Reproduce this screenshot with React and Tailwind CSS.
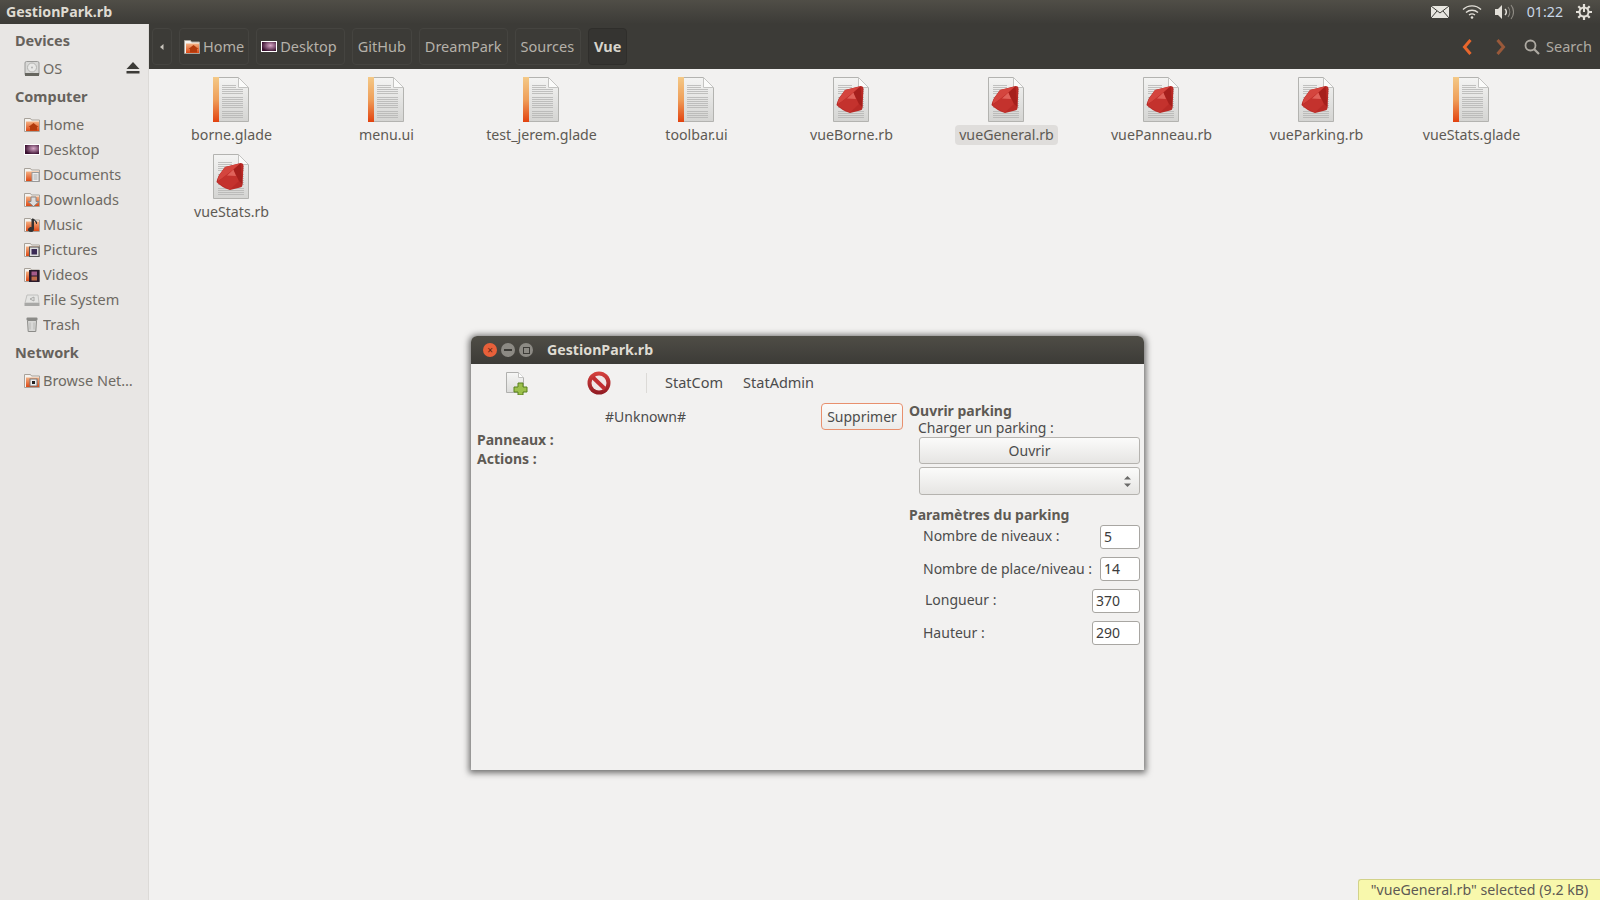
const font = { fontFamily: '"Noto Sans", "Open Sans", sans-serif' };

const places = [
  { label: "Home", icon: "home" },
  { label: "Desktop", icon: "desktop" },
  { label: "Documents", icon: "docs" },
  { label: "Downloads", icon: "down" },
  { label: "Music", icon: "music" },
  { label: "Pictures", icon: "pics" },
  { label: "Videos", icon: "video" },
  { label: "File System", icon: "fs" },
  { label: "Trash", icon: "trash" },
];
const files = [
  ["borne.glade", "doc"],
  ["menu.ui", "doc"],
  ["test_jerem.glade", "doc"],
  ["toolbar.ui", "doc"],
  ["vueBorne.rb", "ruby"],
  ["vueGeneral.rb", "ruby"],
  ["vuePanneau.rb", "ruby"],
  ["vueParking.rb", "ruby"],
  ["vueStats.glade", "doc"],
  ["vueStats.rb", "ruby"],
];

function PlaceIcon({ kind }) {
  if (kind === "desktop")
    return (
      <svg width="16" height="16" viewBox="0 0 16 16">
        <defs>
          <radialGradient id="aubergine" cx="0.6" cy="0.4" r="0.6">
            <stop offset="0" stopColor="#d8a8c8" />
            <stop offset="1" stopColor="#3a1030" />
          </radialGradient>
        </defs>
        <rect x="0.5" y="2.5" width="15" height="10" fill="url(#aubergine)" stroke="#fff" />
      </svg>
    );
  if (kind === "disk")
    return (
      <svg width="16" height="16" viewBox="0 0 16 16">
        <rect x="1" y="0.5" width="14" height="14" rx="1.5" fill="#d8d8d6" stroke="#9a9a98" />
        <circle cx="8" cy="6.500" r="4.500" fill="#e8e8e6" stroke="#b4b4b2" />
        <circle cx="8" cy="6.500" r="1" fill="#b4b4b2" />
        <rect x="1" y="12" width="14" height="3" fill="#66665f" />
      </svg>
    );
  if (kind === "fs")
    return (
      <svg width="16" height="16" viewBox="0 0 16 16">
        <path d="M3 3h11l1 8H1z" fill="#e4e4e2" stroke="#c0c0be" />
        <rect x="0.5" y="11" width="15" height="3" fill="#a8a8a6" />
        <path d="M10 5L6 7l4 2z" fill="none" stroke="#a8a8a6" />
      </svg>
    );
  if (kind === "trash")
    return (
      <svg width="16" height="16" viewBox="0 0 16 16">
        <rect x="2.500" y="0.500" width="11" height="3" rx="1" fill="#8b8b88" />
        <path d="M3.500 3.500h9l-.7 11H4.200z" fill="#d8d8d6" stroke="#8b8b88" />
        <path d="M6 5.500v7M10 5.500v7" stroke="#b8b8b6" />
      </svg>
    );
  const inner = {
    home: <path d="M9.500 6l-5 4h1.500v3.500h7V10h1.500z" fill="#b23a0c" />,
    docs: <><rect x="8" y="5.500" width="7" height="9" fill="#eee" stroke="#999" /><path d="M9.500 8h4M9.500 10h4M9.500 12h4" stroke="#aaa" /></>,
    down: <path d="M7 5h5v4.500h3l-5.500 5-5.500-5h3z" fill="#ddd" stroke="#888" />,
    music: <path d="M9.500 2v10.500a2.500 2 0 1 1-1.500-1.800V2zM9.500 2l3 3v2" fill="#333" stroke="#333" />,
    pics: <><rect x="5.500" y="5" width="9.500" height="9.500" fill="#ddd" stroke="#555" /><rect x="7.500" y="7" width="5.500" height="5.500" fill="#3a2a55" /></>,
    video: <><rect x="5" y="3" width="10.500" height="12" fill="#2a1a2a" /><rect x="7.500" y="4.500" width="5.500" height="4" fill="#a65a8a" /><rect x="7.500" y="9.500" width="5.500" height="4" fill="#c06a4a" /></>,
    browse: <><rect x="6" y="6" width="7" height="7" fill="#eee" stroke="#777" /><rect x="8" y="8" width="3" height="3" fill="#222" /></>,
  }[kind];
  return (
    <svg width="16" height="16" viewBox="0 0 16 16">
      <defs>
        <linearGradient id="folder" x1="0" y1="0" x2="0" y2="1">
          <stop offset="0" stopColor="#f4b183" />
          <stop offset="1" stopColor="#dd4814" />
        </linearGradient>
      </defs>
      <path d="M0.500 1.500h6l1 1.500h8v11.500h-15z" fill="#f5f3ef" stroke="#a8a29a" />
      <rect x="2" y="4.500" width="13" height="9.500" fill="url(#folder)" />
      {inner}
    </svg>
  );
}

function SideItem({ label, icon }) {
  return (
    <div className="flex h-[25px] items-center gap-[3px] pl-6 text-[14.5px] text-[#6e6a63]">
      <PlaceIcon kind={icon} />
      <span className="truncate">{label}</span>
    </div>
  );
}

function SideHead({ children, className }) {
  return <div className={`pl-[15px] text-[14.5px] font-bold text-[#66625c] ${className}`}>{children}</div>;
}

function Sidebar() {
  return (
    <aside className="flex w-[149px] shrink-0 flex-col border-r border-[#dcdad7] bg-[#e8e6e4] pt-[5px]">
      <SideHead className="h-[22px] leading-[22px]">Devices</SideHead>
      <div className="mt-[4px] flex items-center justify-between pr-[8px]">
        <div className="mt-[1px]">
          <SideItem label="OS" icon="disk" />
        </div>
        <svg width="14" height="12" viewBox="0 0 14 12">
          <path d="M7 0l6.500 7H.5z" fill="#3c3b37" />
          <rect x="0.500" y="9" width="13" height="2.500" fill="#3c3b37" />
        </svg>
      </div>
      <SideHead className="mt-[4px] h-[27px] leading-[22px]">Computer</SideHead>
      {places.map((p) => (
        <SideItem key={p.label} {...p} />
      ))}
      <SideHead className="mt-[2px] h-[29px] leading-[27px]">Network</SideHead>
      <SideItem label="Browse Net…" icon="browse" />
    </aside>
  );
}

function Crumb({ children, active, icon, padding = "px-[5px]" }) {
  return (
    <div
      className={`flex h-[37px] items-center gap-[3px] rounded-[4px] text-[14.5px] ${padding} ${
        active ? "bg-[#353431] border border-[#2f2e2b] font-bold text-[#d8d4cc]" : "border border-[#454440] text-[#b5b1a9]"
      }`}
    >
      {icon && <PlaceIcon kind={icon} />}
      {children}
    </div>
  );
}

function Toolbar() {
  return (
    <div className="flex h-[45px] items-center bg-[#3c3b37] pl-[3px] pr-2">
      <div className="mr-[7px] flex h-[37px] w-5 items-center justify-center rounded-[4px] border border-[#454440]">
        <svg width="4" height="6" viewBox="0 0 4 6"><path d="M3.500 0v6L0 3z" fill="#c9c5bd" /></svg>
      </div>
      <div className="flex items-center gap-[7px]">
        <Crumb icon="home" padding="pl-[4px] pr-[4px]">Home</Crumb>
        <Crumb icon="desktop" padding="pl-[4px] pr-[7px]">Desktop</Crumb>
        <Crumb>GitHub</Crumb>
        <Crumb>DreamPark</Crumb>
        <Crumb padding="pl-[5px] pr-[6px]">Sources</Crumb>
        <Crumb active>Vue</Crumb>
      </div>
      <div className="ml-auto flex items-center text-[14.5px] text-[#aeaaa2]">
        <svg width="12" height="18" viewBox="0 0 12 18" className="mr-[22px]">
          <path d="M9.500 2L3.500 9l6 7" fill="none" stroke="#e8662c" strokeWidth="3" />
        </svg>
        <svg width="12" height="18" viewBox="0 0 12 18" className="mr-[17px]">
          <path d="M2.500 2l6 7-6 7" fill="none" stroke="#99593a" strokeWidth="3" />
        </svg>
        <svg width="16" height="16" viewBox="0 0 16 16" className="mr-[6px]">
          <circle cx="6.500" cy="6.500" r="5" fill="none" stroke="#aeaaa2" strokeWidth="1.800" />
          <path d="M10 10l5 5" stroke="#aeaaa2" strokeWidth="2.200" />
        </svg>
        Search
      </div>
    </div>
  );
}

function FileIcon({ kind }) {
  const lines = [6, 8, 10, 12, 14, 18, 20, 22, 24, 26, 28, 32, 34, 36, 38];
  return (
    <svg width="36" height="45" viewBox="0 0 36 45" className="mr-[2px] shrink-0">
      <defs>
        <linearGradient id="paper" x1="0" y1="0" x2="0" y2="1">
          <stop offset="0" stopColor="#f4f4f3" />
          <stop offset="1" stopColor="#d4d4d2" />
        </linearGradient>
        <linearGradient id="spine" x1="0" y1="0" x2="0" y2="1">
          <stop offset="0" stopColor="#f4c987" />
          <stop offset="0.5" stopColor="#ef9f5a" />
          <stop offset="1" stopColor="#e2420f" />
        </linearGradient>
      </defs>
      <path d="M.5.5h25l10 10v34H.5z" fill="url(#paper)" stroke="#b3b3b0" />
      <path d="M25.500.5v10h10z" fill="#fbfbfa" stroke="#c4c4c2" />
      {kind === "doc" && <rect x="0" y="0" width="6" height="45" fill="url(#spine)" />}
      {lines.map((y) => (
        <rect
          key={y}
          x={kind === "doc" ? 9 : 5}
          y={y + 2}
          width={y < 10 ? 14 : kind === "doc" ? 21 : 26}
          height="0.800"
          fill="#b5b5b3"
        />
      ))}
      {kind === "ruby" && (
        <>
          <path d="M12 13L27.500 9Q30.500 9 30.500 12L29.500 31Q29.500 33 27 33.500L17 36Q8 33 3.500 28Q4 25 6 21z" fill="#b92a26" />
          <path d="M12 13L27 9.500 20.500 15.500 9.500 24 5 27Q5 23 6.500 21z" fill="#d4453e" />
          <path d="M9.500 24L20.500 15.500 26 27 17 35.500Q9 32 4.500 28z" fill="#c4322d" />
          <path d="M14 21.500L20.500 15.500 23 22z" fill="#e0625a" />
          <path d="M20.500 15.500L27.500 9.500 29.500 30 26 27z" fill="#a6201d" />
        </>
      )}
    </svg>
  );
}

function FileItem({ name, kind, selected }) {
  return (
    <div className="flex h-[77px] w-[155px] flex-col items-center">
      <FileIcon kind={kind} />
      <div className={`mt-[3px] rounded-[4px] px-[4px] text-[14.2px] leading-[20px] text-[#5e5a54] ${selected ? "bg-[#dfdddb] text-[#3c3b37]" : ""}`}>
        {name}
      </div>
    </div>
  );
}

function Panel() {
  return (
    <div className="flex h-6 items-center justify-between bg-gradient-to-b from-[#504e47] to-[#3c3b37] pl-[6px] pr-2 text-[14.2px] shadow-[0_1px_2px_rgba(0,0,0,0.5)]">
      <span className="font-bold text-[#dfdbd2]">GestionPark.rb</span>
      <div className="flex items-center text-[#c9d7e6]">
        <svg width="18" height="12" viewBox="0 0 18 12" className="mr-[13px]">
          <rect width="18" height="12" fill="#e8e6e0" />
          <path d="M0 0l9 7 9-7M0 12l6-7M18 12l-6-7" fill="none" stroke="#3c3b37" />
        </svg>
        <svg width="20" height="14" viewBox="0 0 20 14" className="mr-[12px]">
          <path d="M1 4.500a13 13 0 0 1 18 0M4 7.500a9 9 0 0 1 12 0M7 10a5 5 0 0 1 6 0" fill="none" stroke="#e3e0d9" strokeWidth="1.400" />
          <circle cx="10" cy="12.500" r="1.300" fill="#e3e0d9" />
        </svg>
        <svg width="20" height="16" viewBox="0 0 20 16" className="mr-[13px]">
          <path d="M1 5h3l4-4v14l-4-4H1z" fill="#e3e0d9" />
          <path d="M11 5a4 4 0 0 1 0 6" fill="none" stroke="#e3e0d9" strokeWidth="1.500" />
          <path d="M14 3a8 8 0 0 1 0 10M17 1a11 11 0 0 1 0 14" fill="none" stroke="#8f8c85" strokeWidth="1.100" />
        </svg>
        <span className="mr-[13px]">01:22</span>
        <svg width="16" height="16" viewBox="0 0 16 16">
          <circle cx="8" cy="8" r="4.500" fill="none" stroke="#e3e0d9" strokeWidth="2" />
          <path d="M8 1v7" stroke="#e3e0d9" strokeWidth="2" />
          <path d="M8 0v3M8 13v3M0 8h3M13 8h3M2.300 2.300l2 2M13.700 2.300l-2 2M2.300 13.700l2-2M13.700 13.700l-2-2" stroke="#e3e0d9" strokeWidth="2.200" />
        </svg>
      </div>
    </div>
  );
}

function FormRow({ label, value, wide, top, indent }) {
  return (
    <div className={`flex h-[23px] items-center justify-between ${top}`}>
      <span className={`${indent} text-[14px] text-[#4c4c4c]`}>{label}</span>
      <div className={`flex h-[24px] items-center rounded-[3px] border border-[#a8a6a2] bg-white pl-[3px] text-[14px] text-[#3c3c3c] ${wide ? "w-[48px]" : "w-[40px]"}`}>
        {value}
      </div>
    </div>
  );
}

function GestionWindow() {
  return (
    <div className="absolute left-[471px] top-[336px] flex h-[434px] w-[673px] flex-col overflow-hidden rounded-t-[6px] bg-[#f2f1f0] shadow-[0_1px_6px_2px_rgba(0,0,0,0.55)]">
      <div className="flex h-[28px] shrink-0 items-center bg-gradient-to-b from-[#4f4d46] to-[#3c3b37] pl-[12px]">
        <div className="flex h-[14px] w-[14px] items-center justify-center rounded-full bg-[#e8603a] text-[10px] leading-none text-[#5c2412]">×</div>
        <div className="ml-1 flex h-[14px] w-[14px] items-center justify-center rounded-full bg-[#8c8a84]">
          <div className="h-[2px] w-[8px] bg-[#3c3b37]" />
        </div>
        <div className="ml-1 flex h-[14px] w-[14px] items-center justify-center rounded-full bg-[#8c8a84]">
          <div className="h-[7px] w-[7px] border border-[#3c3b37]" />
        </div>
        <span className="ml-[14px] text-[14.2px] font-bold text-[#dfdbd2]">GestionPark.rb</span>
      </div>

      <div className="flex h-[38px] shrink-0 items-center text-[14.5px] text-[#4c4c4c]">
        <svg width="24" height="24" viewBox="0 0 24 24" className="ml-[33px]">
          <defs>
            <linearGradient id="stop" x1="0" y1="0" x2="0" y2="1">
              <stop offset="0" stopColor="#d8423e" />
              <stop offset="1" stopColor="#8f1a22" />
            </linearGradient>
            <linearGradient id="sheet" x1="0" y1="0" x2="0" y2="1">
              <stop offset="0" stopColor="#f6f6f5" />
              <stop offset="1" stopColor="#dcdcda" />
            </linearGradient>
          </defs>
          <path d="M2.500 1.500h12l5 5v15h-17z" fill="url(#sheet)" stroke="#b0b0ae" />
          <path d="M14.500 1.500v5h5" fill="#fff" stroke="#c4c4c2" />
          <path d="M14 12h5v4h4v5h-4v3h-5v-3h-4v-5h4z" fill="#9cc04c" stroke="#58801c" />
        </svg>
        <svg width="24" height="24" viewBox="0 0 24 24" className="ml-[59px]">
          <circle cx="12" cy="12" r="11.500" fill="url(#stop)" />
          <circle cx="12" cy="12" r="7.500" fill="#f0e6e6" />
          <path d="M6 6.500L18 18" stroke="#c22e32" strokeWidth="4" />
        </svg>
        <div className="ml-[35px] h-[20px] w-px bg-[#dcdad7]" />
        <span className="-mt-[1px] ml-[18px]">StatCom</span>
        <span className="-mt-[1px] ml-[20px]">StatAdmin</span>
      </div>

      <div className="flex flex-1">
        <div className="w-[432px] shrink-0 pl-[6px] pt-[1px]">
          <div className="flex h-[27px] items-center justify-between text-[14px] text-[#4c4c4c]">
            <span className="ml-[128px]">#Unknown#</span>
            <button className="h-[27px] w-[82px] rounded-[4px] border border-[#e8906e] bg-gradient-to-b from-[#fbfbfa] to-[#ecebe9] text-[14px] text-[#4c4c4c]">
              Supprimer
            </button>
          </div>
          <div className="text-[14px] font-bold leading-[19px] text-[#5e5a54]">Panneaux :</div>
          <div className="text-[14px] font-bold leading-[19px] text-[#5e5a54]">Actions :</div>
        </div>

        <div className="ml-[6px] w-[231px] shrink-0">
          <div className="text-[14px] font-bold leading-[17px] text-[#5e5a54]">Ouvrir parking</div>
          <div className="pl-[9px] text-[14px] leading-[17px] text-[#4c4c4c]">Charger un parking :</div>
          <button className="ml-[10px] mt-[1px] h-[27px] w-[221px] rounded-[3px] border border-[#b5b3af] bg-gradient-to-b from-[#fbfbfa] to-[#e6e5e3] text-[14px] text-[#4c4c4c]">
            Ouvrir
          </button>
          <div className="ml-[10px] mt-[3px] flex h-[28px] w-[221px] items-center justify-end rounded-[3px] border border-[#b5b3af] bg-gradient-to-b from-[#fbfbfa] to-[#e6e5e3] pr-2">
            <svg width="7" height="11" viewBox="0 0 7 11">
              <path d="M3.500 0L7 3.500H0zM3.500 11L0 7.500h7z" fill="#6a6a68" />
            </svg>
          </div>
          <div className="mt-[11px] text-[14px] font-bold leading-[18px] text-[#5e5a54]">Paramètres du parking</div>
          <FormRow label="Nombre de niveaux :" value="5" top="mt-[1px]" indent="ml-[14px] -mt-[2px]" />
          <FormRow label="Nombre de place/niveau :" value="14" top="mt-[9px]" indent="ml-[14px]" />
          <FormRow label="Longueur :" value="370" wide top="mt-[9px]" indent="ml-[16px] -mt-[2px]" />
          <FormRow label="Hauteur :" value="290" wide top="mt-[9px]" indent="ml-[14px]" />
        </div>
      </div>
    </div>
  );
}

export default function App() {
  return (
    <div style={font} className="relative flex h-[900px] w-[1600px] flex-col overflow-hidden bg-[#f2f1f0]">
      <Panel />
      <div className="flex min-h-0 flex-1">
        <Sidebar />
        <main className="relative flex min-w-0 flex-1 flex-col">
          <Toolbar />
          <div className="flex flex-wrap content-start pl-[5px] pt-2">
            {files.map(([name, kind]) => (
              <FileItem key={name} name={name} kind={kind} selected={name === "vueGeneral.rb"} />
            ))}
          </div>
          <div className="absolute bottom-0 right-0 h-[21px] w-[242px] rounded-tl-[3px] border border-b-0 border-r-0 border-[#d2d28a] bg-[#f8f8ac] text-center text-[14.2px] leading-[20px] text-[#5e5a54]">
            "vueGeneral.rb" selected (9.2 kB)
          </div>
        </main>
      </div>
      <GestionWindow />
    </div>
  );
}
